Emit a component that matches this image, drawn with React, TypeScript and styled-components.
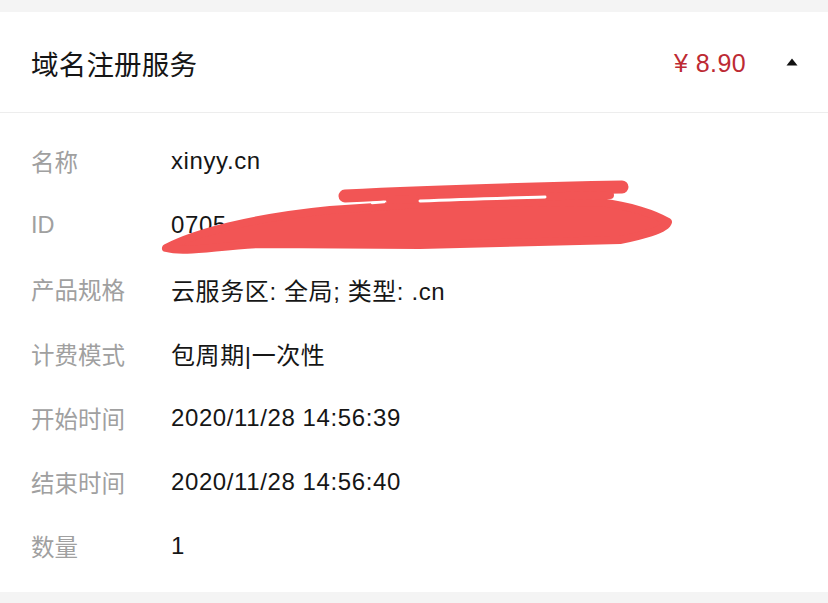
import React from "react";
import styled, { createGlobalStyle } from "styled-components";

const Global = createGlobalStyle`
  html, body { margin: 0; padding: 0; background: #f4f4f4; }
  body { font-family: "Liberation Sans", "Noto Sans CJK SC", sans-serif; -webkit-font-smoothing: antialiased; }
`;

const Page = styled.div`
  width: 828px;
  height: 603px;
  background: #f4f4f4;
  padding-top: 12px;
  box-sizing: border-box;
  overflow: hidden;
`;

const Card = styled.div`
  background: #ffffff;
  height: 580px;
  display: flex;
  flex-direction: column;
`;

const Header = styled.div`
  height: 100px;
  border-bottom: 1px solid #ededed;
  display: flex;
  align-items: center;
  padding: 0 30px 0 31px;
`;

const Title = styled.div`
  flex: 1;
  font-size: 27.5px;
  color: #151515;
  font-family: "Noto Sans CJK SC", sans-serif;
  letter-spacing: 0.2px;
  padding-top: 2px;
`;

const Price = styled.div`
  font-size: 25px;
  letter-spacing: 0.4px;
  color: #bd2a33;
  margin-right: 40px;
  padding-top: 3px;
`;

const Body = styled.div`
  padding-top: 16px;
  display: flex;
  flex-direction: column;
`;

const Row = styled.div`
  height: 64.2px;
  display: flex;
  align-items: center;
  padding-left: 31px;
  position: relative;
`;

const Label = styled.div`
  width: 140px;
  font-size: 23.5px;
  color: #a0a0a0;
`;

const Value = styled.div`
  font-size: 24px;
  letter-spacing: 0.6px;
  color: #161616;
`;

const Scribble = styled.svg`
  position: absolute;
  left: 0;
  top: -20px;
  pointer-events: none;
`;

const rows: [string, string][] = [
  ["名称", "xinyy.cn"],
  ["ID", "0705"],
  ["产品规格", "云服务区: 全局; 类型: .cn"],
  ["计费模式", "包周期|一次性"],
  ["开始时间", "2020/11/28 14:56:39"],
  ["结束时间", "2020/11/28 14:56:40"],
  ["数量", "1"],
];

export default function App() {
  return (
    <>
      <Global />
      <Page>
        <Card>
          <Header>
            <Title>域名注册服务</Title>
            <Price>¥ 8.90</Price>
            <svg width="12" height="8" viewBox="0 0 12 8">
              <path d="M6 0.5 L11.5 7.5 L0.5 7.5 Z" fill="#111" />
            </svg>
          </Header>
          <Body>
            {rows.map(([l, v]) => (
              <Row key={l}>
                <Label>{l}</Label>
                <Value>{v}</Value>
                {l === "ID" && (
                  <Scribble width="828" height="90" viewBox="0 173 828 90">
                    <g fill="#f25555" stroke="#f25555" strokeLinecap="round" strokeLinejoin="round">
                      <path
                        d="M166 248 C 195 233, 250 218, 330 210 L 420 204 L 600 202 C 630 206, 655 214, 668 222 C 666 230, 640 236, 620 240 L 420 245 L 260 244 C 215 246, 185 253, 166 248 Z"
                        strokeWidth="8"
                      />
                      <path d="M345 196 C 420 192, 520 189, 622 187" strokeWidth="13" fill="none" />
                      <path d="M390 200 L 610 195" strokeWidth="8" fill="none" />
                    </g>
                    <g stroke="#ffffff" strokeLinecap="round" fill="none">
                      <path d="M372 203 L 384 202" strokeWidth="2.5" />
                      <path d="M420 201 C 470 199, 510 198, 545 197" strokeWidth="3" />
                    </g>
                  </Scribble>
                )}
              </Row>
            ))}
          </Body>
        </Card>
      </Page>
    </>
  );
}
